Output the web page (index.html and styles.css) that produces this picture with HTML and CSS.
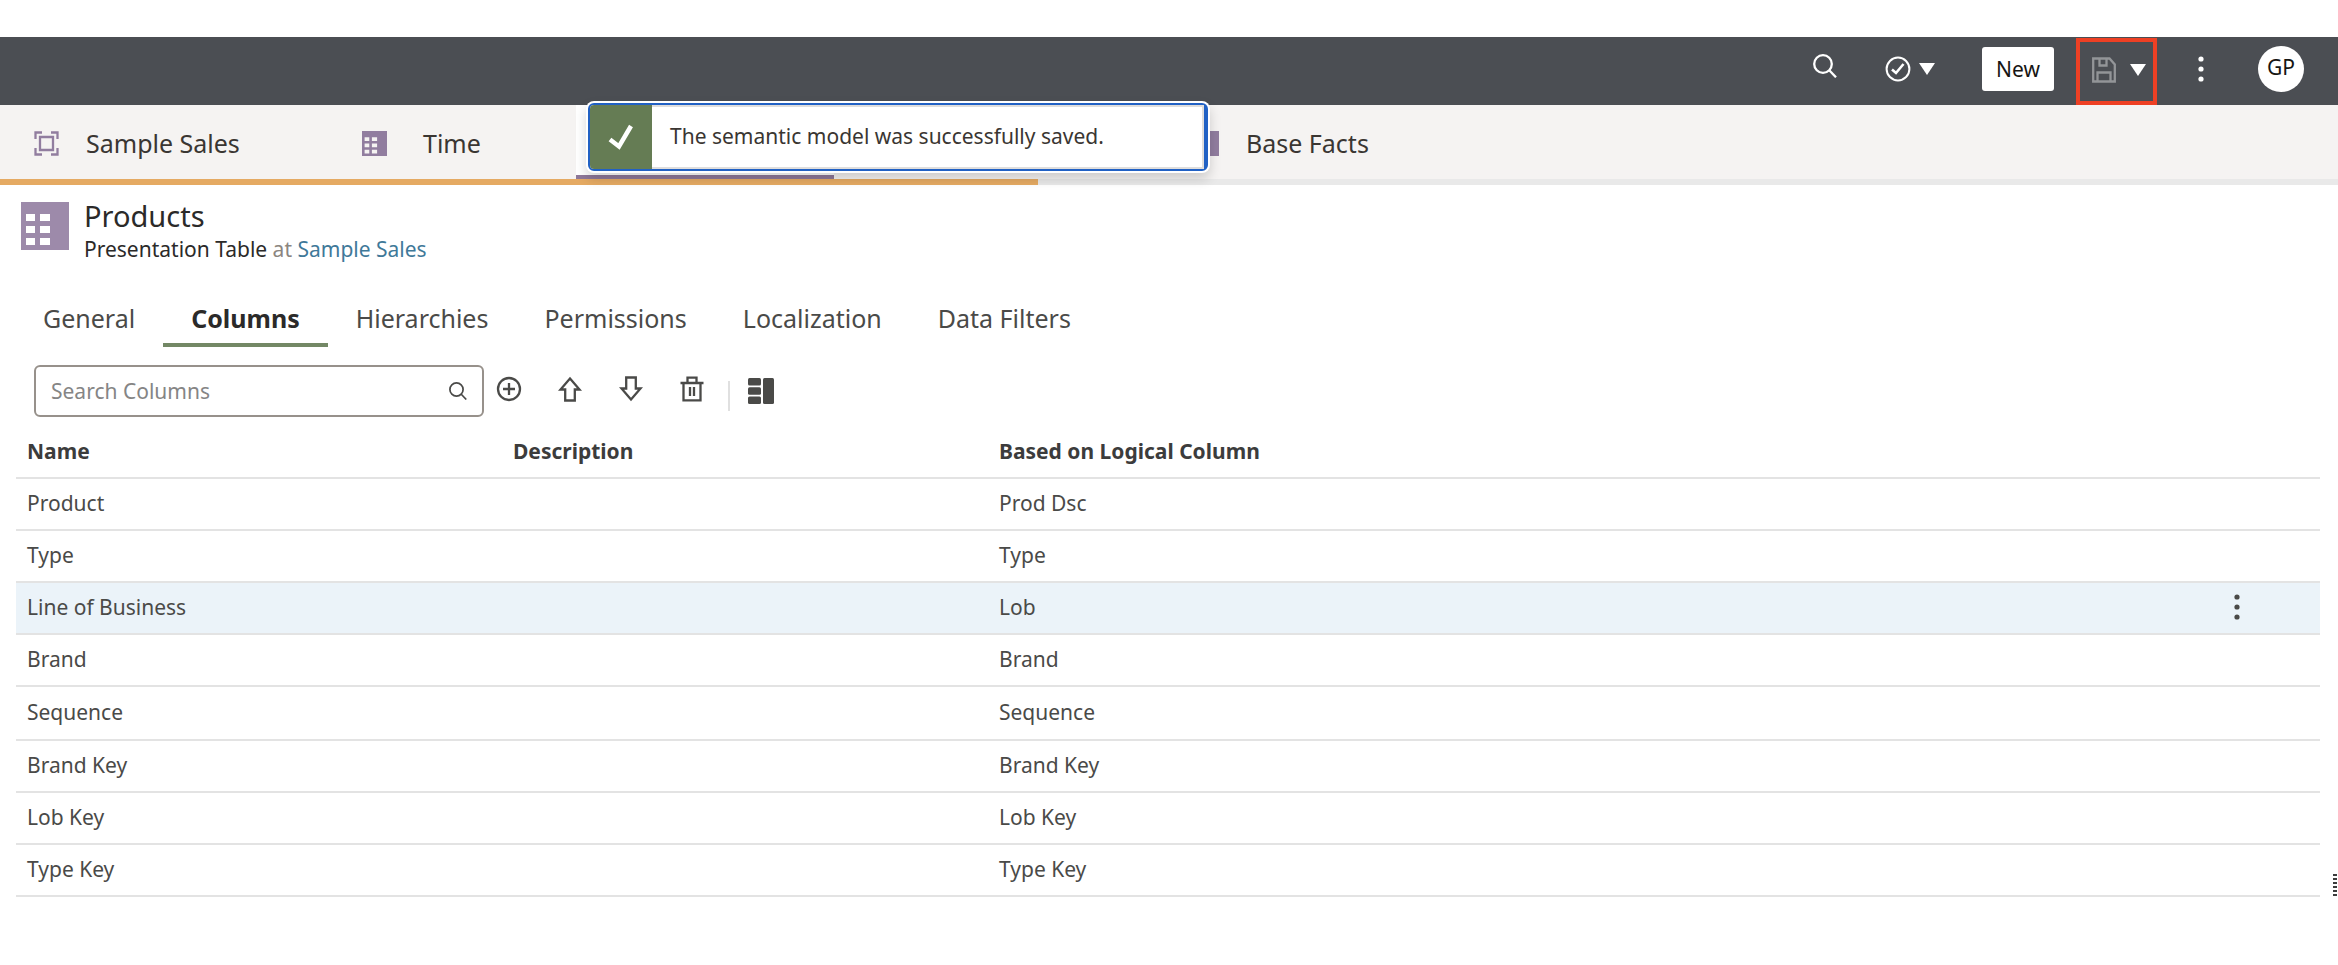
FILE: index.html
```html
<!DOCTYPE html>
<html lang="en">
<head>
<meta charset="utf-8">
<title>Products - Semantic Model</title>
<link rel="stylesheet" href="styles.css">
</head>
<body>
<svg class="defs" aria-hidden="true">
  <symbol id="table" viewBox="0 0 48 48"><path fill="currentColor" fill-rule="evenodd" d="M0 0H48V48H0ZM5 12V19H14V12ZM19 12V19H29V12ZM5 24V31H14V24ZM19 24V31H29V24ZM5 36V43H14V36ZM19 36V43H29V36Z"/></symbol>
  <symbol id="caret" viewBox="0 0 16 12"><path fill="currentColor" d="M0 0H16L8 12Z"/></symbol>
  <symbol id="dots" viewBox="0 0 6 26"><g fill="currentColor"><circle cx="3" cy="3" r="2.6"/><circle cx="3" cy="13" r="2.6"/><circle cx="3" cy="23" r="2.6"/></g></symbol>
  <symbol id="search" viewBox="0 0 24 24"><g fill="none" stroke="currentColor" stroke-width="2.300"><circle cx="10" cy="10" r="8.800"/><path d="M16 16L23 23.3"/></g></symbol>
</svg>

<header class="topbar">
  <button class="icon-btn search-btn" aria-label="Search"><svg width="24" height="24"><use href="#search"/></svg></button>
  <button class="icon-btn check-btn" aria-label="Validate">
    <svg width="26" height="26" viewBox="0 0 26 26" fill="none" stroke="currentColor" stroke-width="2"><circle cx="13" cy="13" r="11.4"/><path stroke-width="2.6" d="M7 13.5L11 17L18.5 8"/></svg>
    <svg width="16" height="12"><use href="#caret"/></svg>
  </button>
  <button class="new-btn">New</button>
  <div class="save-group">
    <button class="icon-btn save-btn" aria-label="Save"><svg width="24" height="26" viewBox="0 0 24 26" fill="none" stroke="currentColor" stroke-width="2.300"><path d="M1.200 1.5H17.5L22.800 7.5V24.5H1.200ZM7.500 1.5V8.5H14.500V1.5M5.500 24V15.500H18.500V24"/></svg></button>
    <button class="icon-btn" aria-label="Save options"><svg width="16" height="12"><use href="#caret"/></svg></button>
  </div>
  <button class="icon-btn more-btn" aria-label="More"><svg width="6" height="26"><use href="#dots"/></svg></button>
  <button class="avatar">GP</button>
</header>

<div class="toast" role="status">
  <span class="toast-icon"><svg width="26" height="26" viewBox="0 0 26 26" fill="none" stroke="#fff" stroke-width="4.500"><path d="M2 15.500L11 22.500L23 2"/></svg></span>
  <span class="toast-text">The semantic model was successfully saved.</span>
</div>

<nav class="files" aria-label="Open objects">
  <a class="file file-model" href="#"><svg class="file-icon" width="25" height="25" viewBox="0 0 25 25" fill="none" stroke="currentColor" stroke-width="2.300"><path d="M1.500 8V1.500H8M17 1.500H23.500V8M23.500 17V23.500H17M8 23.500H1.500V17M6 6H19V19H6Z"/></svg>Sample Sales</a>
  <a class="file file-time" href="#"><svg class="file-icon" width="25" height="25"><use href="#table"/></svg>Time</a>
  <a class="file file-active" href="#" aria-label="Products" aria-current="page"></a>
  <a class="file file-facts" href="#"><svg class="file-icon" width="25" height="25"><use href="#table"/></svg>Base Facts</a>
</nav>
<div class="track"><div class="track-fill"></div></div>

<main>
  <section class="heading">
    <svg class="heading-icon" width="48" height="48"><use href="#table"/></svg>
    <div>
      <h1>Products</h1>
      <p class="subtitle">Presentation Table <span class="at">at</span> <a href="#">Sample Sales</a></p>
    </div>
  </section>

  <div class="tabs" role="tablist">
    <button class="tab" role="tab">General</button>
    <button class="tab tab-on" role="tab" aria-selected="true">Columns</button>
    <button class="tab" role="tab">Hierarchies</button>
    <button class="tab" role="tab">Permissions</button>
    <button class="tab" role="tab">Localization</button>
    <button class="tab" role="tab">Data Filters</button>
  </div>

  <div class="toolbar">
    <label class="search-box"><input type="text" placeholder="Search Columns" aria-label="Search Columns"><svg width="18" height="18"><use href="#search"/></svg></label>
    <div class="tools">
      <button class="icon-btn" aria-label="Add"><svg width="26" height="26" viewBox="0 0 26 26" fill="none" stroke="currentColor" stroke-width="2.300"><circle cx="13" cy="13" r="11"/><path d="M13 7V19M7 13H19"/></svg></button>
      <button class="icon-btn" aria-label="Move up"><svg width="26" height="26" viewBox="0 0 26 26" fill="none" stroke="currentColor" stroke-width="2.300"><path d="M13 2.500L22.500 13.500H17.800V24.500H8.200V13.500H3.500Z"/></svg></button>
      <button class="icon-btn" aria-label="Move down"><svg width="26" height="26" viewBox="0 0 26 26" fill="none" stroke="currentColor" stroke-width="2.300"><path d="M13 23.500L22.500 12.500H17.800V1.500H8.200V12.500H3.500Z"/></svg></button>
      <button class="icon-btn" aria-label="Delete"><svg width="26" height="26" viewBox="0 0 26 26" fill="none" stroke="currentColor" stroke-width="2.300"><path d="M1.500 7H24.500M4.500 7V24.300H21.500V7M8.500 7V1.700H17.500V7M11 11V20M15 11V20"/></svg></button>
    </div>
    <span class="divider"></span>
    <button class="icon-btn" aria-label="Columns layout"><svg width="26" height="26" viewBox="0 0 26 26" fill="currentColor"><rect width="13" height="7.500" rx="1.500"/><rect y="9.300" width="13" height="7.500" rx="1.500"/><rect y="18.500" width="13" height="7.500" rx="1.500"/><rect x="15" width="11" height="26" rx="1.500"/></svg></button>
  </div>

  <table>
    <colgroup><col class="col"><col class="col"><col><col class="col-menu"></colgroup>
    <thead><tr><th>Name</th><th>Description</th><th>Based on Logical Column</th><th></th></tr></thead>
    <tbody>
      <tr><td>Product</td><td></td><td>Prod Dsc</td><td></td></tr>
      <tr><td>Type</td><td></td><td>Type</td><td></td></tr>
      <tr class="selected"><td>Line of Business</td><td></td><td>Lob</td><td><button class="icon-btn" aria-label="Row actions"><svg width="6" height="26"><use href="#dots"/></svg></button></td></tr>
      <tr><td>Brand</td><td></td><td>Brand</td><td></td></tr>
      <tr class="tall"><td>Sequence</td><td></td><td>Sequence</td><td></td></tr>
      <tr><td>Brand Key</td><td></td><td>Brand Key</td><td></td></tr>
      <tr><td>Lob Key</td><td></td><td>Lob Key</td><td></td></tr>
      <tr><td>Type Key</td><td></td><td>Type Key</td><td></td></tr>
    </tbody>
  </table>
</main>
<div class="grip"></div>
</body>
</html>
```
FILE: styles.css
```css
* { box-sizing: border-box; }
body { margin: 0; padding-top: 37px; position: relative; background: #fff; color: #4a4a48; font-family: "Noto Sans", "Open Sans", sans-serif; font-size: 21px; line-height: 30px; }
button { font: inherit; color: inherit; border: 0; padding: 0; background: none; cursor: pointer; }
svg { display: block; flex: none; }
a { text-decoration: none; }
.defs { position: absolute; width: 0; height: 0; }
.icon-btn { display: flex; align-items: center; gap: 8px; }

.topbar { display: flex; justify-content: flex-end; align-items: center; height: 68px; padding: 0 34px 4px 0; background: #4b4e53; color: #fff; }
.search-btn { margin-right: 48px; padding-bottom: 6px; }
.check-btn { margin-right: 47px; }
.new-btn { width: 72px; height: 44px; margin-right: 22px; border-radius: 3px; background: #fff; color: #161513; }
.save-group { display: flex; align-items: center; align-self: flex-end; gap: 14px; height: 67px; margin: 0 41px -4px 0; padding: 0 7px 4px 12px; border: 4px solid #ee4024; }
.save-btn { color: #939598; }
.more-btn { margin-right: 54px; }
.avatar { width: 46px; height: 46px; padding-bottom: 4px; border-radius: 50%; background: #fff; color: #161513; }

.toast { position: absolute; z-index: 2; left: 588px; top: 103px; display: flex; width: 620px; height: 68px; border: 2px solid #2161c4; border-right-width: 4px; border-radius: 6px; background: #fff; box-shadow: 0 0 0 2px #fff, 0 6px 12px 2px rgba(0, 0, 0, .16); }
.toast-icon { display: flex; align-items: center; justify-content: center; width: 62px; border-radius: 4px 0 0 4px; background: #657c54; }
.toast-text { flex: 1; padding: 14px 18px; border: 2px solid #dfdedd; border-left: 0; color: #3a3632; }

.files { display: flex; height: 74px; background: #f5f3f2; font-size: 25px; }
.file { display: flex; align-items: center; color: #3a3632; padding-top: 2px; white-space: nowrap; }
.file-icon { color: #917d9f; }
.file-model { gap: 27px; width: 328px; padding-left: 34px; }
.file-time { gap: 36px; width: 248px; padding-left: 34px; }
.file-active { width: 258px; background: #fff; border-bottom: 4px solid #8e7899; }
.file-facts { gap: 27px; padding-left: 360px; }
.track { height: 6px; background: #e9e9e9; }
.track-fill { width: 44.4%; height: 100%; background: #e5aa63; }

.heading { display: flex; gap: 15px; padding: 13px 21px 0; }
.heading-icon { margin-top: 4px; color: #9d8aaa; }
h1 { margin: 0; font-size: 29px; line-height: 36px; font-weight: 400; color: #2b2a29; }
.subtitle { margin: 0; color: #2b2a29; }
.at { color: #8b8580; }
.subtitle a { color: #3f7999; }

.tabs { display: flex; padding: 28px 0 0 15px; font-size: 25px; line-height: 32px; }
.tab { padding: 10px 28px 9px; border-bottom: 4px solid transparent; }
.tab-on { font-weight: 700; color: #2b2a29; border-color: #738865; }

.toolbar { display: flex; align-items: center; padding: 18px 34px 0; }
.search-box { display: flex; align-items: center; width: 450px; height: 52px; padding: 0 15px; border: 2px solid #97918b; border-radius: 6px; }
.search-box input { flex: 1; min-width: 0; padding: 0; border: 0; outline: 0; background: none; font: inherit; color: inherit; }
.search-box input::placeholder { color: #858585; opacity: 1; }
.tools { display: flex; gap: 35px; padding: 0 23px 5px 12px; }
.divider { width: 2px; height: 30px; margin: 10px 18px 0 0; background: #e0e0e0; }

table { width: calc(100% - 34px); margin: 10px 18px 0 16px; border-collapse: separate; border-spacing: 0; table-layout: fixed; }
.col { width: 486px; }
.col-menu { width: 97px; }
th, td { height: 52px; padding: 0 11px 2px; border-bottom: 2px solid #e3e3e3; text-align: left; }
th { color: #3c3c3c; font-weight: 700; }
.tall td { height: 54px; }
.selected td { background: #ebf3f9; }
.grip { position: absolute; right: 1px; top: 874px; width: 4px; height: 30px; background: repeating-linear-gradient(#3c3c3c 0 2px, transparent 2px 4px); }
```
